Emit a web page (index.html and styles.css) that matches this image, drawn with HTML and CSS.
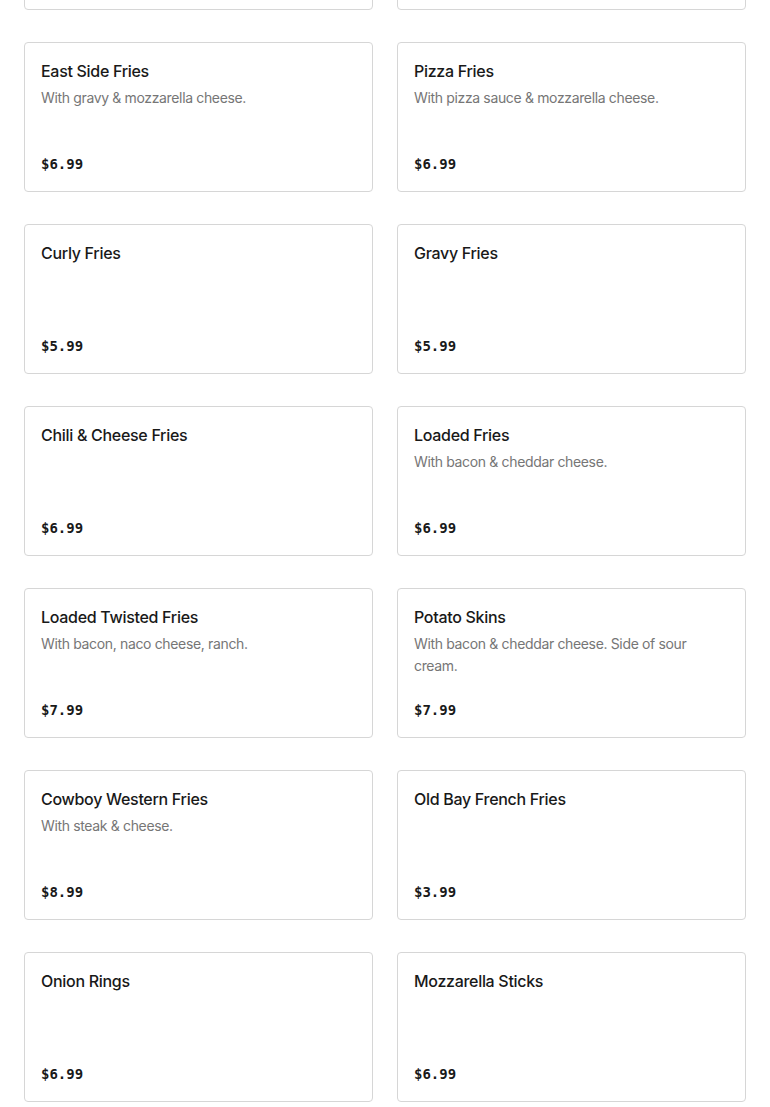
FILE: index.html
```html
<!DOCTYPE html>
<html lang="en">
<head>
<meta charset="utf-8">
<title>Menu</title>
<link rel="stylesheet" href="styles.css">
</head>
<body>
<main class="menu">
  <div class="grid">
    <div class="card card-partial" aria-hidden="true"></div>
    <div class="card card-partial" aria-hidden="true"></div>

    <div class="card"><div class="name">East Side Fries</div><div class="desc">With gravy &amp; mozzarella cheese.</div><div class="price">$6.99</div></div>
    <div class="card"><div class="name">Pizza Fries</div><div class="desc">With pizza sauce &amp; mozzarella cheese.</div><div class="price">$6.99</div></div>

    <div class="card"><div class="name">Curly Fries</div><div class="price">$5.99</div></div>
    <div class="card"><div class="name">Gravy Fries</div><div class="price">$5.99</div></div>

    <div class="card"><div class="name">Chili &amp; Cheese Fries</div><div class="price">$6.99</div></div>
    <div class="card"><div class="name">Loaded Fries</div><div class="desc">With bacon &amp; cheddar cheese.</div><div class="price">$6.99</div></div>

    <div class="card"><div class="name">Loaded Twisted Fries</div><div class="desc">With bacon, naco cheese, ranch.</div><div class="price">$7.99</div></div>
    <div class="card"><div class="name">Potato Skins</div><div class="desc">With bacon &amp; cheddar cheese. Side of sour cream.</div><div class="price">$7.99</div></div>

    <div class="card"><div class="name">Cowboy Western Fries</div><div class="desc">With steak &amp; cheese.</div><div class="price">$8.99</div></div>
    <div class="card"><div class="name">Old Bay French Fries</div><div class="price">$3.99</div></div>

    <div class="card"><div class="name">Onion Rings</div><div class="price">$6.99</div></div>
    <div class="card"><div class="name">Mozzarella Sticks</div><div class="price">$6.99</div></div>
  </div>
</main>
</body>
</html>
```
FILE: styles.css
```css
html, body {
  margin: 0;
  padding: 0;
  background: #ffffff;
}
body {
  font-family: Inter, "Liberation Sans", Arial, sans-serif;
  color: #191919;
  overflow: hidden;
}
.menu {
  padding: 0 24px;
  margin-top: -140px;
}
.grid {
  display: grid;
  grid-template-columns: 349px 349px;
  column-gap: 24px;
  row-gap: 32px;
}
.card {
  box-sizing: border-box;
  height: 150px;
  border: 1px solid #d6d6d6;
  border-radius: 4px;
  padding: 16px;
  display: flex;
  flex-direction: column;
}
.name {
  font-size: 16px;
  line-height: 24px;
  font-weight: 500;
  color: #191919;
  letter-spacing: -0.3px;
}
.desc {
  margin-top: 4px;
  font-size: 14px;
  line-height: 22px;
  color: #767676;
  letter-spacing: -0.35px;
}
.price {
  margin-top: auto;
  font-family: "DejaVu Sans Mono", "Liberation Mono", monospace;
  font-weight: bold;
  font-size: 14px;
  line-height: 22px;
  color: #191919;
}
```
